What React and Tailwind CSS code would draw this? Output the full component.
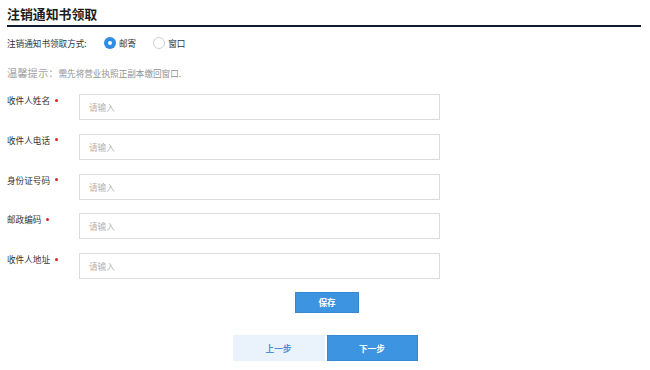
import React from 'react';

const fields = ['收件人姓名', '收件人电话', '身份证号码', '邮政编码', '收件人地址'];

const Radio = ({ checked, label }) => (
    <label className="flex items-center gap-[3px] cursor-pointer">
        {checked ? (
            <span className="w-[12px] h-[12px] rounded-full bg-[#2f8de4] flex items-center justify-center">
                <span className="w-[4px] h-[4px] rounded-full bg-white" />
            </span>
        ) : (
            <span className="w-[12px] h-[12px] rounded-full border border-[#cfcfcf] bg-white" />
        )}
        <span className="text-[#333]">{label}</span>
    </label>
);

const App = () => {
    return (
        <div className="w-[650px] h-[370px] bg-white overflow-hidden text-[8.6px] text-[#333] font-['Noto_Sans_CJK_SC','Noto_Sans',sans-serif]">
            {/* Title */}
            <div className="ml-[7px] mr-[9px] h-[27px] pt-[6px] border-b-2 border-[#0f1c2e]">
                <h2 className="text-[12.9px] leading-[16px] font-bold text-[#1c1c1c]">注销通知书领取</h2>
            </div>

            {/* Pickup method */}
            <div className="h-[32px] pl-[7px] flex items-center">
                <span className="w-[97px]">注销通知书领取方式:</span>
                <div className="flex items-center gap-[17px]">
                    <Radio checked label="邮寄" />
                    <Radio label="窗口" />
                </div>
            </div>

            {/* Hint */}
            <div className="h-[28px] pl-[7px] flex items-center text-[#a3a3a3]">
                <span className="text-[10.3px]">温馨提示：</span>
                <span className="text-[#939393]">需先将营业执照正副本缴回窗口.</span>
            </div>

            {/* Form */}
            <div className="mt-[7px] pl-[7px] flex flex-col gap-[13.75px]">
                {fields.map((f) => (
                    <div key={f} className="flex items-start">
                        <div className="w-[72px] leading-[12px] flex items-center gap-[5px]">
                            <span>{f}</span>
                            <span className="w-[3px] h-[3px] rounded-full bg-[#e02020]" />
                        </div>
                        <input
                            placeholder="请输入"
                            className="w-[361px] h-[26px] px-[9px] border border-[#dcdcdc] bg-white outline-none placeholder:text-[#b3b3b3] text-[8.6px]"
                        />
                    </div>
                ))}
            </div>

            {/* Save */}
            <div className="mt-[13px] flex justify-center pl-[4px]">
                <button className="w-[64px] h-[21px] bg-[#3d94e0] border border-[#3488d4] text-white font-bold">
                    保存
                </button>
            </div>

            {/* Steps */}
            <div className="mt-[22px] flex justify-center gap-[2px]">
                <button className="w-[92px] h-[26px] bg-[#eaf3fc] text-[#4a8fd8] font-bold">上一步</button>
                <button className="w-[91px] h-[26px] bg-[#3d94e0] border border-[#3488d4] text-white font-bold">下一步</button>
            </div>
        </div>
    );
};

export default App;
